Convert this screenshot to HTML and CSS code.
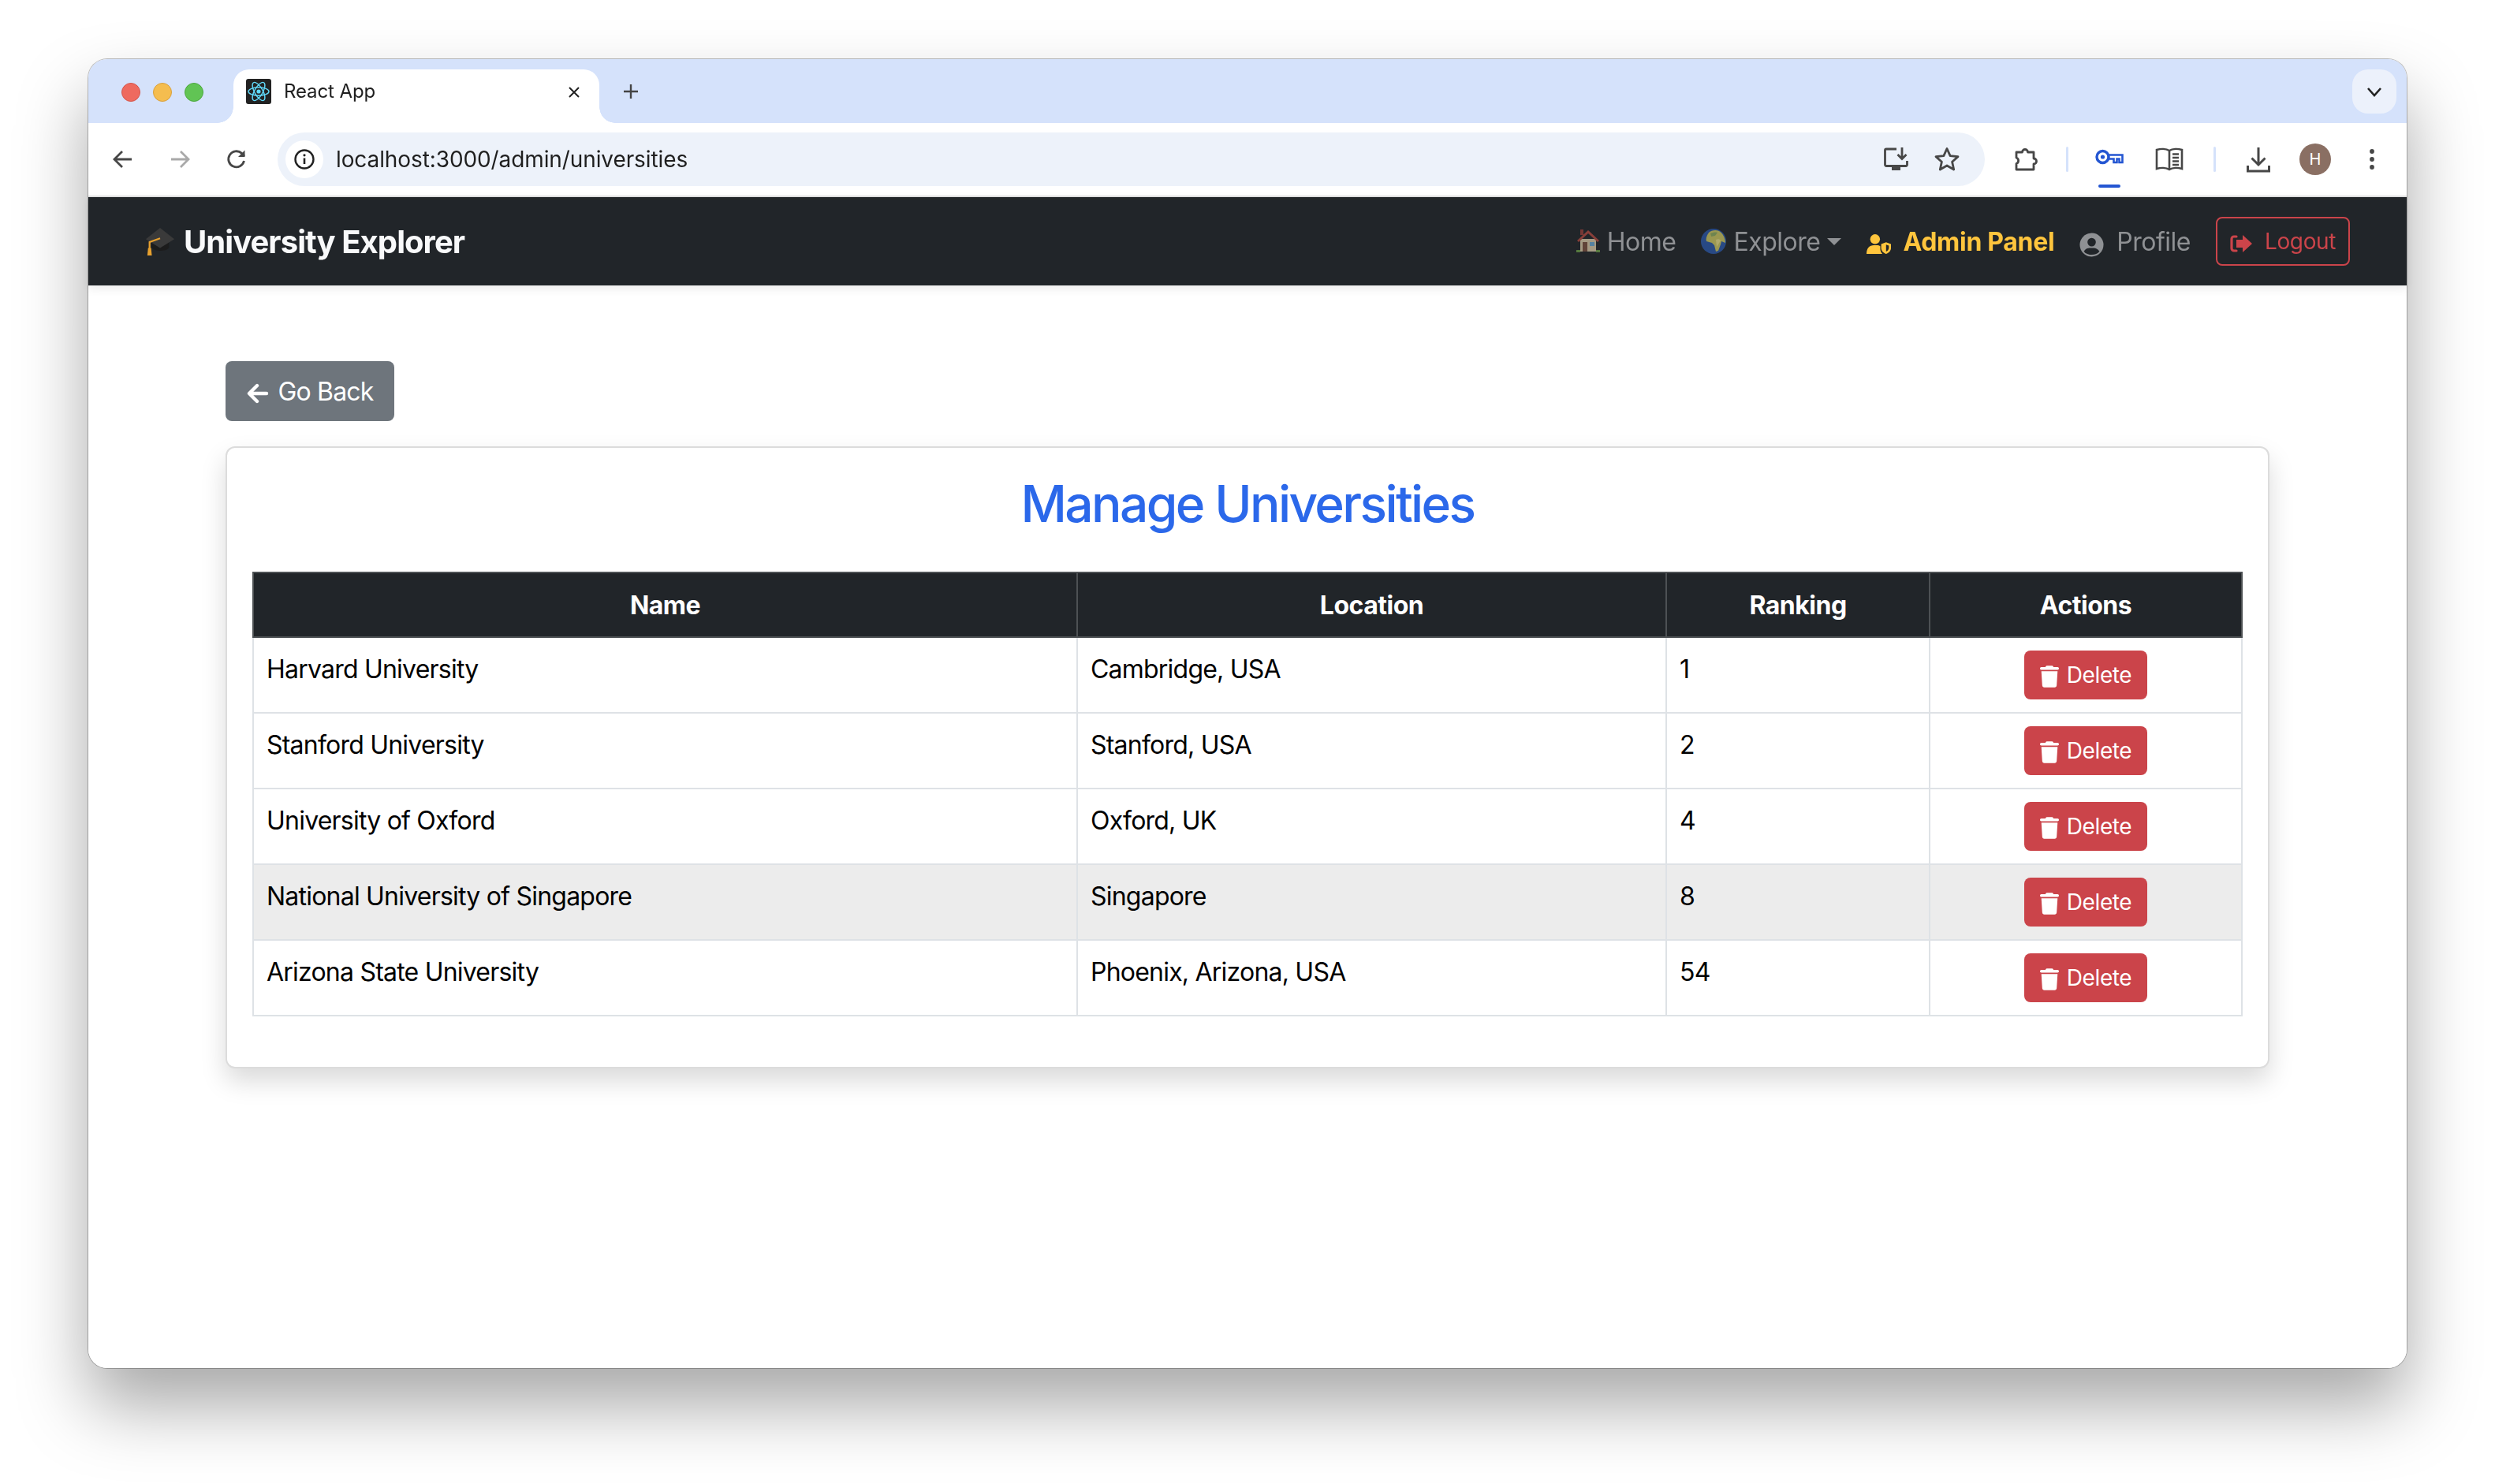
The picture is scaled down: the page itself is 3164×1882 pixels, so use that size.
FILE: index.html
```html
<!DOCTYPE html>
<html lang="en">
<head>
<meta charset="utf-8">
<title>React App</title>
<link rel="stylesheet" href="styles.css">
</head>
<body>
<svg class="defs" width="0" height="0">
  <symbol id="trash" viewBox="0 0 448 512"><path fill="currentColor" d="M135.2 17.7L128 32H32C14.3 32 0 46.3 0 64S14.3 96 32 96H416c17.7 0 32-14.3 32-32s-14.3-32-32-32H320l-7.2-14.3C307.4 6.8 296.3 0 284.2 0H163.8c-12.1 0-23.2 6.8-28.6 17.7zM416 128H32L53.2 467c1.6 25.3 22.6 45 47.9 45H346.9c25.3 0 46.3-19.7 47.9-45L416 128z"/></symbol>
</svg>
<div class="window">
  <div class="tabstrip">
    <div class="lights"><span class="light red"></span><span class="light amber"></span><span class="light green"></span></div>
    <div class="tab">
      <svg class="favicon" viewBox="0 0 32 32"><rect width="32" height="32" rx="3" fill="#222"/><g fill="none" stroke="#61dafb" stroke-width="1.4"><ellipse cx="16" cy="16" rx="13" ry="5.2"/><ellipse cx="16" cy="16" rx="13" ry="5.2" transform="rotate(60 16 16)"/><ellipse cx="16" cy="16" rx="13" ry="5.2" transform="rotate(120 16 16)"/></g><circle cx="16" cy="16" r="2.6" fill="#61dafb"/></svg>
      <span class="tab-title">React App</span>
      <svg class="tab-close" viewBox="0 0 16 16"><path d="M2 2l12 12M14 2L2 14" stroke="#222" stroke-width="2" fill="none"/></svg>
    </div>
    <svg class="newtab" viewBox="0 0 24 24"><path d="M12 3v18M3 12h18" stroke="#444" stroke-width="2.4" fill="none"/></svg>
    <div class="tabmenu"><svg viewBox="0 0 20 20"><path d="M2 6l8 9 8-9" stroke="#222" stroke-width="2.6" fill="none"/></svg></div>
  </div>

  <div class="toolbar">
    <span class="tbtn"><svg viewBox="0 0 32 32"><path d="M27 16H6M15 6L5 16l10 10" fill="none" stroke="#474747" stroke-width="2.8"/></svg></span>
    <span class="tbtn"><svg viewBox="0 0 32 32"><path d="M5 16h21M17 6l10 10-10 10" fill="none" stroke="#a9a9a9" stroke-width="2.8"/></svg></span>
    <span class="tbtn"><svg viewBox="0 0 32 32"><path d="M25.5 18a10 10 0 1 1-3-9.6L26 12" fill="none" stroke="#474747" stroke-width="2.8"/><path d="M26.5 4.5V13H18z" fill="#474747"/></svg></span>
    <div class="omnibox">
      <span class="site-info"><svg viewBox="0 0 28 28"><circle cx="14" cy="14" r="11.5" fill="none" stroke="#222" stroke-width="2.4"/><path d="M14 12.5v7.5" stroke="#222" stroke-width="2.6"/><circle cx="14" cy="8.8" r="1.6" fill="#222"/></svg></span>
      <span class="url">localhost:3000/admin/universities</span>
      <span class="omni-icons">
        <svg viewBox="0 0 36 36"><path d="M19 5H6a1.5 1.5 0 0 0-1.5 1.5V25A1.5 1.5 0 0 0 6 26.5h25a1.5 1.5 0 0 0 1.5-1.5V20" fill="none" stroke="#474747" stroke-width="2.8"/><path d="M13 27h11v5H13z" fill="#474747"/><path d="M26 3v14M20.5 12l5.5 5.5 5.5-5.5" fill="none" stroke="#474747" stroke-width="2.8"/></svg>
        <svg viewBox="0 0 36 36"><path d="M18 4.5l4.1 9.1 9.9 1-7.4 6.6 2.1 9.8-8.7-5-8.700 5 2.100-9.800L4 14.600l9.900-1z" fill="none" stroke="#474747" stroke-width="2.8" stroke-linejoin="round"/></svg>
      </span>
    </div>
    <span class="tbtn ext"><svg viewBox="0 0 36 36"><path d="M7 9h7.500a3.500 3.500 0 0 1 7 0H29v8a3.500 3.500 0 0 1 0 7v7H7v-7.500a4 4 0 0 0 0-7.500z" fill="none" stroke="#474747" stroke-width="2.8" stroke-linejoin="round"/></svg></span>
    <span class="tdiv"></span>
    <span class="tbtn key"><svg viewBox="0 0 40 36"><circle cx="11.5" cy="15" r="7.5" fill="none" stroke="#2456d2" stroke-width="3.4"/><circle cx="11.5" cy="15" r="2.6" fill="#2456d2"/><path d="M19 12.5h17.500v9.500h-4v-4.500h-3V22h-4v-4.500H19z" fill="none" stroke="#2456d2" stroke-width="2.6"/></svg><i class="key-bar"></i></span>
    <span class="tbtn book"><svg viewBox="0 0 40 36"><path d="M20 7C16 4.500 9 4.500 4 6v24c5-1.500 12-1.500 16 1 4-2.500 11-2.500 16-1V6C31 4.500 24 4.500 20 7zM20 7v24" fill="none" stroke="#474747" stroke-width="2.6"/><path d="M24 11.500h8M24 16h8M24 20.500h8M24 25h8" stroke="#474747" stroke-width="2.6"/></svg></span>
    <span class="tdiv second"></span>
    <span class="tbtn dl"><svg viewBox="0 0 36 36"><path d="M18 3v22M9.500 16.500L18 25l8.500-8.500M4.500 26v7h27v-7" fill="none" stroke="#474747" stroke-width="3"/></svg></span>
    <span class="tbtn"><span class="avatar">H</span></span>
    <span class="tbtn"><svg viewBox="0 0 32 32"><circle cx="16" cy="6" r="2.9" fill="#474747"/><circle cx="16" cy="16" r="2.9" fill="#474747"/><circle cx="16" cy="26" r="2.9" fill="#474747"/></svg></span>
  </div>

  <nav class="navbar">
    <a class="brand">
      <svg class="cap" viewBox="0 0 40 40"><path d="M9 18v11c5 5 18 5 23 0V18z" fill="#1c1c1c"/><path d="M20 2L39 17 20 29 1 17z" fill="#3a3a3a"/><path d="M20 16L6 21v11" fill="none" stroke="#e7a12f" stroke-width="2.4"/><path d="M4 29h4l1 10H3z" fill="#e7a12f"/></svg>
      <span>University Explorer</span>
    </a>
    <div class="nav-links">
      <a class="nav-item">
        <svg class="emoji" viewBox="0 0 32 32"><g opacity=".72"><path d="M6 13h20v16H6z" fill="#d9c7a6"/><path d="M16 2L2 15l2 2L16 6l12 11 2-2z" fill="#b04a40"/><path d="M6 1h4v7H6z" fill="#96403a"/><path d="M9 17h6v12H9z" fill="#7a5040"/><path d="M18 17h6v5h-6z" fill="#6aa6d0"/><path d="M1 27h5v3H1zM26 27h5v3h-5z" fill="#6b9a48"/></g></svg>
        <span>Home</span>
      </a>
      <a class="nav-item globe-item">
        <svg class="emoji" viewBox="0 0 32 32"><g opacity=".82"><circle cx="16" cy="16" r="16" fill="#2a5298"/><path d="M10 5c3-3 9-4 13-2 5 3 8 9 8 15l-5-2-1 4-3 8-3 1-2-8-3-3-7-2c-1-3 0-7 3-11z" fill="#b6b25a"/><path d="M12 6c3-1 6-2 9-1l-3 4-5 1z" fill="#7f9a58"/><path d="M19 14c2-1 5-1 6 1l-3 5-2 3z" fill="#cfc77a"/></g></svg>
        <span>Explore</span><i class="caret"></i>
      </a>
      <a class="nav-item admin">
        <svg class="fa-icon user-shield" viewBox="0 0 40 32"><circle cx="14" cy="8" r="8" fill="currentColor"/><path d="M0 32c0-9 5-14 12-14h5c2 0 4 .5 5.500 1.500V24c0 3 1.500 6 3.500 8z" fill="currentColor"/><path d="M32 13l8 3v6c0 5-3.500 8.500-8 10-4.500-1.500-8-5-8-10v-6z" fill="currentColor"/><path d="M32 17l4.500 1.700V22c0 3-1.800 5-4.500 6.300z" fill="#212529"/></svg>
        <span>Admin Panel</span>
      </a>
      <a class="nav-item profile">
        <svg class="fa-icon" viewBox="0 0 32 32"><circle cx="16" cy="16" r="15.5" fill="#8f9194"/><circle cx="16" cy="12.5" r="5.5" fill="#212529"/><path d="M5.800 24.500C8 21 11 20 13 20h6c2 0 5 1 7.200 4.500C24 27.500 20.500 29 16 29s-8-1.500-10.200-4.500z" fill="#212529"/></svg>
        <span>Profile</span>
      </a>
      <a class="logout">
        <svg class="logout-icon" viewBox="0 0 28 22"><path d="M8 2H5a3 3 0 0 0-3 3v12a3 3 0 0 0 3 3h3" fill="none" stroke="currentColor" stroke-width="3.2" stroke-linecap="round"/><path d="M16 0L28 11 16 22v-6H8V6h8z" fill="currentColor"/></svg>
        <span>Logout</span>
      </a>
    </div>
  </nav>

  <main class="content">
    <button class="back">
      <svg class="back-icon" viewBox="0 0 28 28"><path d="M25 14H4M13 4L3 14l10 10" fill="none" stroke="currentColor" stroke-width="4.4" stroke-linecap="round" stroke-linejoin="round"/></svg>
      <span>Go Back</span>
    </button>
    <section class="card">
      <h2 class="title">Manage Universities</h2>
      <table class="unis">
        <colgroup><col class="c-name"><col class="c-loc"><col class="c-rank"><col class="c-act"></colgroup>
        <thead><tr><th>Name</th><th>Location</th><th>Ranking</th><th>Actions</th></tr></thead>
        <tbody>
          <tr><td>Harvard University</td><td>Cambridge, USA</td><td>1</td><td class="act"><button class="del"><svg class="del-icon"><use href="#trash"/></svg><span>Delete</span></button></td></tr>
          <tr><td>Stanford University</td><td>Stanford, USA</td><td>2</td><td class="act"><button class="del"><svg class="del-icon"><use href="#trash"/></svg><span>Delete</span></button></td></tr>
          <tr><td>University of Oxford</td><td>Oxford, UK</td><td>4</td><td class="act"><button class="del"><svg class="del-icon"><use href="#trash"/></svg><span>Delete</span></button></td></tr>
          <tr class="hover"><td>National University of Singapore</td><td>Singapore</td><td>8</td><td class="act"><button class="del"><svg class="del-icon"><use href="#trash"/></svg><span>Delete</span></button></td></tr>
          <tr><td>Arizona State University</td><td>Phoenix, Arizona, USA</td><td>54</td><td class="act"><button class="del"><svg class="del-icon"><use href="#trash"/></svg><span>Delete</span></button></td></tr>
        </tbody>
      </table>
    </section>
  </main>
</div>
</body>
</html>
```
FILE: styles.css
```css
* { box-sizing: border-box; }
html, body { margin: 0; height: 100%; }
body {
  background: #fff;
  font-family: Inter, "Liberation Sans", sans-serif;
  padding: 75px 112px 147px;
  overflow: hidden;
}
.defs { position: absolute; }
.window {
  height: 1660px;
  border-radius: 24px;
  background: #fff;
  display: flex;
  flex-direction: column;
  box-shadow: 0 0 0 1px rgba(0,0,0,.25);
  filter: drop-shadow(0 48px 44px rgba(0,0,0,.34));
}

/* tab strip */
.tabstrip {
  height: 81px;
  flex: none;
  background: #d5e2fb;
  border-radius: 24px 24px 0 0;
  display: flex;
  align-items: flex-start;
  padding-top: 13px;
  position: relative;
}
.lights { display: flex; gap: 16px; padding: 17px 0 0 42px; width: 184px; }
.light { width: 24px; height: 24px; border-radius: 50%; }
.red { background: #ee6a5f; border: 1px solid #d4574d; }
.amber { background: #f5bd4f; border: 1px solid #d8a03d; }
.green { background: #61c454; border: 1px solid #4da83f; }
.tab {
  width: 464px;
  height: 68px;
  background: #fff;
  border-radius: 20px 20px 0 0;
  display: flex;
  align-items: flex-start;
  padding: 12px 0 0 16px;
  position: relative;
}
.tab::before, .tab::after {
  content: "";
  position: absolute;
  bottom: 0;
  width: 20px;
  height: 20px;
}
.tab::before { left: -20px; background: radial-gradient(circle at 0 0, #d5e2fb 19.5px, #fff 20px); }
.tab::after { right: -20px; background: radial-gradient(circle at 100% 0, #d5e2fb 19.5px, #fff 20px); }
.favicon { width: 32px; height: 32px; flex: none; }
.tab-title { margin-left: 16px; font-size: 24px; line-height: 32px; color: #1f1f1f; letter-spacing: -.1px; flex: 1; }
.tab-close { width: 16px; height: 16px; margin: 9px 24px 0 0; }
.newtab { width: 24px; height: 24px; margin: 16px 0 0 28px; }
.tabmenu {
  margin-left: auto;
  margin-right: 13px;
  width: 56px;
  height: 56px;
  border-radius: 20px;
  background: #ecf1fb;
  display: flex;
  align-items: center;
  justify-content: center;
}
.tabmenu svg { width: 20px; height: 20px; }

/* toolbar */
.toolbar {
  height: 94px;
  flex: none;
  background: #fff;
  border-radius: 16px 16px 0 0;
  border-bottom: 2px solid #e3e3e3;
  display: flex;
  align-items: center;
  padding: 0 8px;
  position: relative;
}
.tbtn { width: 72px; height: 48px; flex: none; display: flex; align-items: center; justify-content: center; position: relative; }
.tbtn svg { width: 32px; height: 32px; }
.omnibox {
  width: 2166px;
  height: 68px;
  margin-left: 16px;
  margin-right: 15px;
  border-radius: 34px;
  background: #edf2fa;
  display: flex;
  align-items: center;
  padding-left: 10px;
}
.site-info { width: 48px; height: 48px; border-radius: 50%; background: #fff; display: flex; align-items: center; justify-content: center; flex: none; }
.site-info svg { width: 28px; height: 28px; }
.url { margin-left: 16px; font-size: 28px; letter-spacing: -.1px; color: #1f1f1f; flex: 1; }
.omni-icons { display: flex; gap: 29px; padding-right: 30px; }
.omni-icons svg { width: 36px; height: 36px; }
.ext svg { width: 36px; height: 36px; }
.tdiv { width: 3px; height: 32px; border-radius: 2px; background: #d5e2fb; margin: 0 16px; flex: none; }
.tdiv.second { margin: 0 18px 0 20px; }
.key { margin-right: 4px; }
.key svg, .book svg { width: 40px; height: 36px; }
.dl svg { width: 36px; height: 36px; }
.key-bar { position: absolute; left: 22px; right: 22px; bottom: -12px; height: 4px; border-radius: 2px; background: #2456d2; }
.avatar { width: 40px; height: 40px; border-radius: 50%; background: #8a6f63; color: #fff; font-size: 20px; display: flex; align-items: center; justify-content: center; }

/* navbar */
.navbar {
  height: 112px;
  flex: none;
  background: #212529;
  display: flex;
  align-items: center;
  justify-content: space-between;
  padding: 0 72px;
  box-shadow: 0 4px 12px rgba(0,0,0,.08);
  position: relative;
}
.brand { display: flex; align-items: center; gap: 11px; color: #f8f9fa; font-size: 40px; font-weight: 700; letter-spacing: -.95px; }
.cap { width: 38px; height: 38px; flex: none; }
.emoji { width: 32px; height: 32px; flex: none; }
.nav-links { display: flex; align-items: center; gap: 32px; }
.nav-item { display: flex; align-items: center; gap: 8px; font-size: 32px; letter-spacing: -.5px; color: #8f9194; }
.globe-item { gap: 9px; }
.admin { color: #ffc53d; font-weight: 700; letter-spacing: -.3px; gap: 7px; }
.fa-icon { width: 31px; height: 31px; flex: none; margin: 8px 8px 0 0; }
.user-shield { height: 25px; margin-top: 6px; }
.caret { width: 0; height: 0; border-left: 9px solid transparent; border-right: 9px solid transparent; border-top: 9px solid currentColor; }
.logout {
  height: 62px;
  width: 170px;
  border: 2px solid #cb444a;
  border-radius: 8px;
  color: #cb444a;
  font-size: 28px;
  letter-spacing: -.4px;
  display: flex;
  align-items: center;
  justify-content: center;
  gap: 16px;
}
.logout-icon { width: 28px; height: 22px; margin-top: 6px; }

/* content */
.content { flex: 1; padding: 96px 174px 0; background: #fff; border-radius: 0 0 24px 24px; }
.back {
  height: 76px;
  width: 214px;
  display: flex;
  align-items: center;
  justify-content: center;
  gap: 12px;
  background: #6e757c;
  color: #fff;
  border: 0;
  border-radius: 8px;
  font: inherit;
  font-size: 32px;
  letter-spacing: -.85px;
  padding: 0;
}
.back-icon { width: 28px; height: 28px; margin-top: 6px; }
.card {
  margin-top: 32px;
  border: 2px solid #dcdcdc;
  border-radius: 12px;
  padding: 32px;
  background: #fff;
  box-shadow: 0 16px 32px rgba(0,0,0,.15);
}
.title { margin: 0 0 48px; text-align: center; color: #2b68ea; font-size: 64px; font-weight: 500; line-height: 77px; letter-spacing: -2.6px; }
.unis { width: 100%; table-layout: fixed; border-collapse: collapse; margin-bottom: 32px; font-size: 32px; letter-spacing: -.78px; color: #000; }
.c-name { width: 1045px; }
.c-loc { width: 747px; }
.c-rank { width: 334px; }
.unis th { background: #212529; color: #fff; border: 2px solid #4d5154; padding: 17px 16px 15px; line-height: 48px; font-weight: 700; text-align: center; letter-spacing: -.5px; }
.unis td { border: 2px solid #dee2e6; padding: 16px; line-height: 48px; vertical-align: top; }
.hover td { background: #ececec; }
.act { text-align: center; }
.del {
  display: inline-flex;
  align-items: center;
  justify-content: center;
  gap: 10px;
  width: 156px;
  height: 62px;
  background: #cb444a;
  color: #fff;
  border: 0;
  border-radius: 8px;
  padding: 0;
  font: inherit;
  font-size: 28px;
  letter-spacing: -.4px;
  vertical-align: top;
}
.del-icon { width: 24px; height: 28px; margin-top: 4px; }
```
